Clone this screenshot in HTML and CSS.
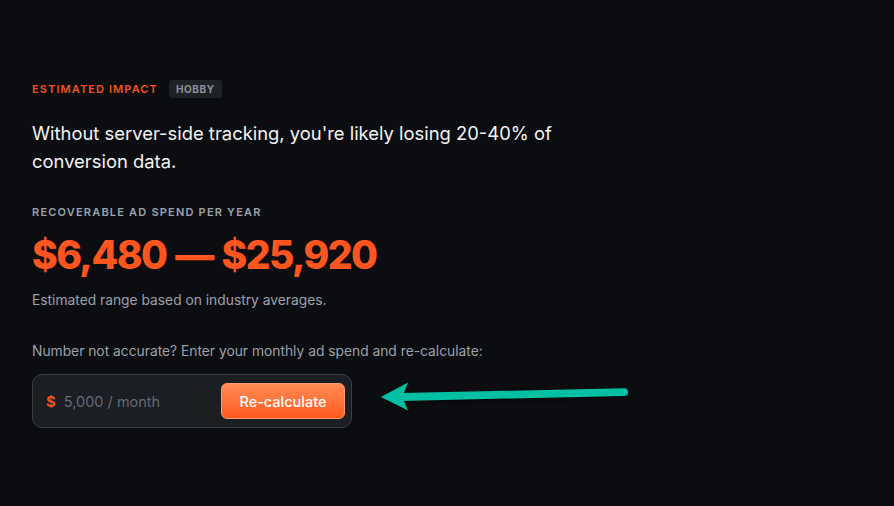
FILE: index.html
```html
<html>
<head>
  <title>Estimated Impact</title>
  <link rel="stylesheet" href="styles.css">
</head>
<body>

<div class="impact">
  <div class="impact-head">
    <span class="eyebrow">Estimated Impact</span>
    <span class="badge">Hobby</span>
  </div>

  <p class="lead">Without server-side tracking, you're likely losing 20-40% of conversion data.</p>

  <div class="label">Recoverable ad spend per year</div>
  <div class="amount">$6,480 — $25,920</div>
  <p class="note">Estimated range based on industry averages.</p>

  <p class="note ask">Number not accurate? Enter your monthly ad spend and re-calculate:</p>

  <div class="calc-row">
    <div class="calc">
      <span class="currency">$</span>
      <input class="spend" type="text" placeholder="5,000 / month">
      <button class="recalc">Re-calculate</button>
    </div>

    <!-- pointer arrow -->
    <svg class="arrow" width="262" height="40" viewBox="0 0 262 40">
      <path d="M254 15 L24 20" stroke="#00bfa3" stroke-width="8" stroke-linecap="round" fill="none"/>
      <path d="M3 20 L31 5 L25 20 L31 34 Z" fill="#00bfa3"/>
    </svg>
  </div>
</div>

</body>
</html>
```

FILE: styles.css
```css
body {
  margin: 0;
  background: #0c0d11;
  font-family: "Inter", "Noto Sans", sans-serif;
  color: #f2f3f5;
}
.impact {
  padding: 80px 32px 0;
  width: 600px;
}
.impact-head {
  display: flex;
  align-items: center;
  gap: 11px;
}
.eyebrow {
  color: #f4511e;
  font-size: 11px;
  font-weight: 600;
  letter-spacing: 1.1px;
  text-transform: uppercase;
}
.badge {
  background: #1e2126;
  color: #8c939d;
  font-size: 10px;
  font-weight: 700;
  letter-spacing: 0.6px;
  text-transform: uppercase;
  padding: 3px 7px;
  border-radius: 3px;
}
.lead {
  margin: 21px 0 0;
  font-size: 18.4px;
  line-height: 28px;
  width: 560px;
}
.label {
  margin-top: 30px;
  color: #9aa2ad;
  font-size: 11px;
  font-weight: 600;
  letter-spacing: 1.2px;
  text-transform: uppercase;
}
.amount {
  margin-top: 12px;
  color: #ff5620;
  font-size: 39px;
  font-weight: 800;
  line-height: 48px;
  letter-spacing: -1.6px;
  word-spacing: 2px;
}
.note {
  margin: 13px 0 0;
  color: #9aa1ab;
  font-size: 13.8px;
}
.ask {
  margin-top: 35px;
}
.calc-row {
  display: flex;
  align-items: flex-start;
  margin-top: 15px;
}
.calc {
  display: flex;
  align-items: center;
  width: 299px;
  height: 52px;
  padding: 0 6px 0 13px;
  background: #1b1e22;
  border: 1px solid #3a3d43;
  border-radius: 10px;
}
.currency {
  color: #f4511e;
  font-weight: 700;
  font-size: 15px;
}
.spend {
  flex: 1;
  min-width: 0;
  margin-left: 6px;
  background: none;
  border: none;
  outline: none;
  color: #f2f3f5;
  font-family: inherit;
  font-size: 14.5px;
}
.spend::placeholder {
  color: #666b73;
}
.recalc {
  width: 124px;
  height: 36px;
  border: 1px solid #ff9a6a;
  border-radius: 6px;
  background: linear-gradient(#ff8b55, #ff5a1f);
  color: #fff;
  font-family: inherit;
  font-size: 14.5px;
  font-weight: 500;
  cursor: pointer;
}
.arrow {
  margin: 3px 0 0 26px;
  filter: drop-shadow(0 2px 2px rgba(0,0,0,0.5));
}
```
